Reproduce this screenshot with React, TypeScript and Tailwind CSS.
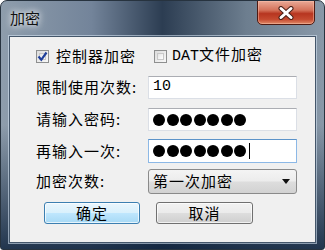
import React from 'react'

const cjk = '[font-family:"Noto_Sans_CJK_SC",sans-serif]'

function CheckBox({ checked }: { checked: boolean }) {
  return (
    <div className="w-[13px] h-[13px] border border-[#8e8f8f] bg-[linear-gradient(135deg,#dcdcdc,#f8f8f8)] p-[2px] shrink-0">
      <div className="w-full h-full border border-[#c8c8c8] bg-[linear-gradient(135deg,#e4e4e4,#ffffff)] flex items-center justify-center">
        {checked && (
          <svg width="9" height="9" viewBox="0 0 9 9" className="overflow-visible">
            <path d="M0.5 4.5 L3.3 7.8 L8.5 0.5" stroke="#1f3f9a" strokeWidth="2.2" fill="none" />
          </svg>
        )}
      </div>
    </div>
  )
}

function Dots({ cursor }: { cursor?: boolean }) {
  return (
    <div className="flex items-center gap-[1.5px] pl-[4px]">
      {[0, 1, 2, 3, 4, 5, 6].map(i => (
        <div key={i} className="w-[12px] h-[12px] rounded-full bg-black" />
      ))}
      {cursor && <div className="w-[1px] h-[16px] bg-black ml-[1px]" />}
    </div>
  )
}

export default function App() {
  return (
    <div className="w-[325px] h-[250px] rounded-t-[7px] rounded-b-[3px] border border-[#27333f] bg-[linear-gradient(180deg,rgba(0,0,0,0)_0%,rgba(0,0,0,0)_50%,rgba(16,36,62,0.85)_100%),linear-gradient(90deg,#8e9dac_0%,#73849a_28%,#2c3d52_50%,#6d7e8f_76%,#8898a8_100%)] flex flex-col overflow-hidden">
      <div className="h-[35px] flex items-start justify-between shrink-0">
        <div className={`${cjk} text-[15px] text-[#111] pl-[9px] pt-[6px] [text-shadow:0_0_6px_#fff,0_0_10px_rgba(255,255,255,0.8)]`}>
          加密
        </div>
        <div className="mr-[9px] mt-[-1px] w-[58px] h-[25px] rounded-b-[5px] border border-[#4e1a12] bg-[linear-gradient(180deg,#e9a996_0%,#d4725a_40%,#b73520_55%,#c54a30_80%,#e08a68_100%)] shadow-[inset_0_0_0_1px_rgba(255,200,180,0.45)] flex items-center justify-center">
          <svg width="18" height="14" viewBox="0 0 18 14">
            <path d="M4 2.5 L14 11.5 M14 2.5 L4 11.5" stroke="#4a2018" strokeWidth="5" strokeLinecap="round" />
            <path d="M4 2.5 L14 11.5 M14 2.5 L4 11.5" stroke="#ffffff" strokeWidth="3" strokeLinecap="round" />
          </svg>
        </div>
      </div>

      <div className="mx-[8px] h-[207px] border border-[#44566a] shadow-[0_0_0_1px_rgba(210,225,240,0.6)] bg-[#f0f0f0] flex flex-col pl-[26px] shrink-0">
        <div className={`${cjk} mt-[9px] h-[20px] flex items-center text-[15px] tracking-[1px] text-black`}>
          <div className="w-[118px] flex items-center gap-[7px]">
            <CheckBox checked />
            <span>控制器加密</span>
          </div>
          <div className="flex items-center gap-[5px]">
            <CheckBox checked={false} />
            <span>
              <span className='[font-family:"Liberation_Mono",monospace] tracking-normal'>DAT</span>文件加密
            </span>
          </div>
        </div>

        <div className={`${cjk} flex flex-col text-[15px] tracking-[1px] text-black`}>
          <div className="mt-[10px] h-[23px] flex items-center">
            <div className="w-[112px]">限制使用次数:</div>
            <div className="w-[149px] h-full bg-white border border-[#dbdfe6] border-t-[#abadb3] flex items-center pl-[4px] [font-family:'Liberation_Mono',monospace] tracking-normal">
              10
            </div>
          </div>
          <div className="mt-[9px] h-[23px] flex items-center">
            <div className="w-[112px]">请输入密码:</div>
            <div className="w-[149px] h-full bg-white border border-[#dbdfe6] border-t-[#abadb3] flex items-center">
              <Dots />
            </div>
          </div>
          <div className="mt-[8px] h-[24px] flex items-center">
            <div className="w-[112px]">再输入一次:</div>
            <div className="w-[149px] h-full bg-white border border-[#8cb8e6] border-t-[#5c93c9] flex items-center">
              <Dots cursor />
            </div>
          </div>
          <div className="mt-[6px] h-[25px] flex items-center">
            <div className="w-[112px]">加密次数:</div>
            <div className="w-[149px] h-full rounded-[3px] border border-[#8a8a8a] bg-[linear-gradient(180deg,#f4f4f4_0%,#ececec_48%,#dddddd_52%,#d2d2d2_100%)] flex items-center justify-between pl-[4px] pr-[6px]">
              <span>第一次加密</span>
              <svg width="8" height="5" viewBox="0 0 8 5">
                <path d="M0 0 H8 L4 5 Z" fill="#111" />
              </svg>
            </div>
          </div>
        </div>

        <div className={`${cjk} mt-[8px] flex gap-[16px] ml-[8px] text-[15px] tracking-[1px] text-black`}>
          <div className="w-[96px] h-[22px] rounded-[3px] border border-[#3c7fb1] bg-[linear-gradient(180deg,#eaf6fd_0%,#d9f0fc_48%,#bee6fd_52%,#a7d9f5_100%)] shadow-[inset_0_0_0_1px_rgba(255,255,255,0.7)] flex items-center justify-center">
            确定
          </div>
          <div className="w-[97px] h-[22px] rounded-[3px] border border-[#707070] bg-[linear-gradient(180deg,#f2f2f2_0%,#ebebeb_48%,#dddddd_52%,#cfcfcf_100%)] shadow-[inset_0_0_0_1px_rgba(255,255,255,0.7)] flex items-center justify-center">
            取消
          </div>
        </div>
      </div>
    </div>
  )
}
